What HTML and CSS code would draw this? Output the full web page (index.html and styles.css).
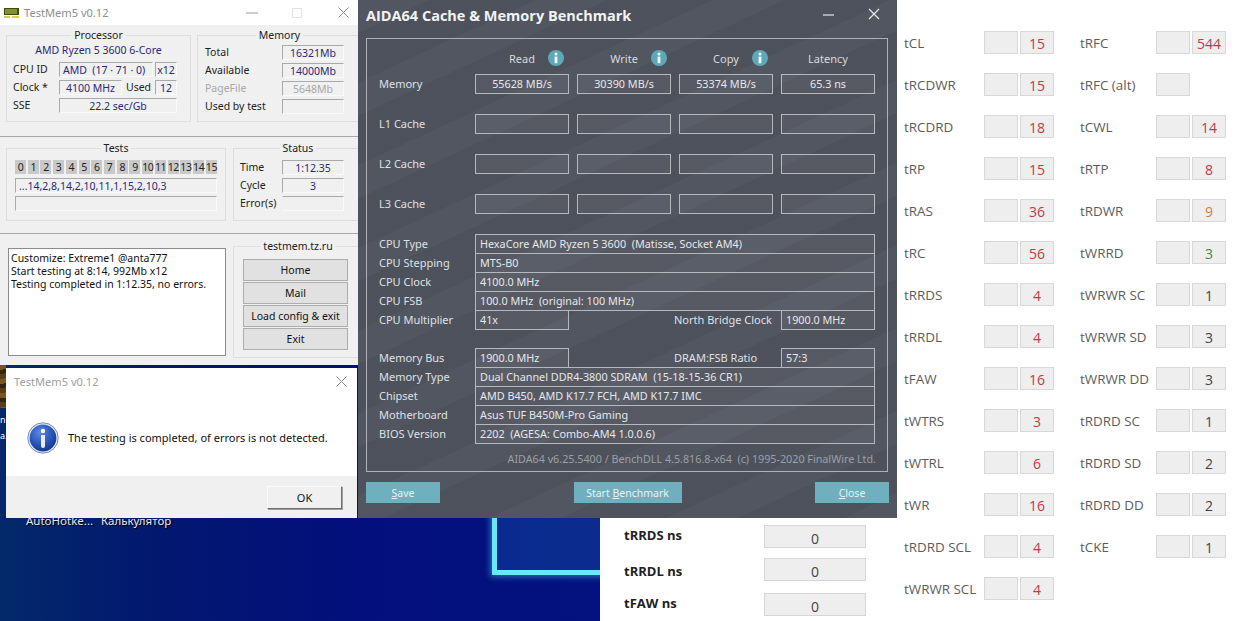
FILE: index.html
```html
<!DOCTYPE html>
<html lang="en">
<head>
<meta charset="utf-8">
<title>TestMem5 and AIDA64</title>
<link rel="stylesheet" href="styles.css">
</head>
<body>
<div class="desktop">
  <div class="wallpaper">
    <div class="neon"></div>
    <div class="tile"></div>
    <span class="edge-a">n</span>
    <span class="edge-b">a.</span>
    <span class="shortcut-a">AutoHotke...</span>
    <span class="shortcut-b">Калькулятор</span>
  </div>

  <section class="tm">
    <header class="tm-title">
      <svg class="tm-icon" width="15" height="12" viewBox="0 0 15 12"><rect x="0" y="1" width="15" height="7" fill="#3d4a12"/><path d="M2 2v5M4 2v5M6 2v5M8 2v5M10 2v5M12 2v5" stroke="#c4d94a" stroke-width="1"/><path d="M0 9h6v2H0zM8 9h7v2H8z" fill="#d8d23a"/></svg>
      <span class="tm-name">TestMem5 v0.12</span>
      <svg class="ctl-min" width="12" height="2" viewBox="0 0 12 2"><path d="M0 1h12" stroke="#9a9a9a"/></svg>
      <svg class="ctl-max" width="10" height="10" viewBox="0 0 10 10"><rect x=".5" y=".5" width="9" height="9" fill="none" stroke="#e2e2e2"/></svg>
      <svg class="ctl-x" width="11" height="11" viewBox="0 0 11 11"><path d="M.5.5l10 10M10.5.5l-10 10" stroke="#8a8a8a"/></svg>
    </header>
    <div class="tm-body">
      <div class="tm-row tm-row-a">
        <fieldset class="group">
          <legend>Processor</legend>
          <div class="cpu-name">AMD Ryzen 5 3600 6-Core</div>
          <div class="fields">
            <div class="f-row"><span class="f-label w46">CPU ID</span><span class="sunk w94 left">AMD&nbsp; (17 · 71 · 0)</span><span class="sunk w22 ml2">x12</span></div>
            <div class="f-row"><span class="f-label w46">Clock *</span><span class="sunk w63">4100 MHz</span><span class="f-label w33 mid">Used</span><span class="sunk w22">12</span></div>
            <div class="f-row"><span class="f-label w46">SSE</span><span class="sunk w118">22.2 sec/Gb</span></div>
          </div>
        </fieldset>
        <fieldset class="group group-mem">
          <legend>Memory</legend>
          <div class="fields">
            <div class="f-row"><span class="f-label w77">Total</span><span class="sunk w62">16321Mb</span></div>
            <div class="f-row"><span class="f-label w77">Available</span><span class="sunk w62">14000Mb</span></div>
            <div class="f-row off"><span class="f-label w77">PageFile</span><span class="sunk w62">5648Mb</span></div>
            <div class="f-row"><span class="f-label w77">Used by test</span><span class="sunk w62"></span></div>
          </div>
        </fieldset>
      </div>
      <div class="rule"></div>
      <div class="tm-row tm-row-b">
        <fieldset class="group group-tests">
          <legend>Tests</legend>
          <div class="cells">
            <span>0</span><span>1</span><span>2</span><span>3</span><span>4</span><span>5</span><span>6</span><span>7</span><span>8</span><span>9</span><span>10</span><span>11</span><span>12</span><span>13</span><span>14</span><span>15</span>
          </div>
          <div class="fields test-lines">
            <span class="sunk w202 left">...14,2,8,14,2,10,11,1,15,2,10,3</span>
            <span class="sunk w202"></span>
          </div>
        </fieldset>
        <fieldset class="group group-status">
          <legend>Status</legend>
          <div class="fields status-lines">
            <div class="f-row"><span class="f-label w42">Time</span><span class="sunk w62">1:12.35</span></div>
            <div class="f-row"><span class="f-label w42">Cycle</span><span class="sunk w62">3</span></div>
            <div class="f-row"><span class="f-label w42">Error(s)</span><span class="sunk w62 top-only"></span></div>
          </div>
        </fieldset>
      </div>
      <div class="rule"></div>
      <div class="tm-row tm-row-c">
        <div class="log">Customize: Extreme1 @anta777<br>Start testing at 8:14, 992Mb x12<br>Testing completed in 1:12.35, no errors.</div>
        <fieldset class="group group-links">
          <legend>testmem.tz.ru</legend>
          <div class="link-btns">
            <button type="button">Home</button>
            <button type="button">Mail</button>
            <button type="button">Load config &amp; exit</button>
            <button type="button">Exit</button>
          </div>
        </fieldset>
      </div>
    </div>
  </section>

  <section class="dialog">
    <header class="dlg-title">
      <span>TestMem5 v0.12</span>
      <svg width="11" height="11" viewBox="0 0 11 11"><path d="M.5.5l10 10M10.5.5l-10 10" stroke="#8a8a8a"/></svg>
    </header>
    <div class="dlg-msg">
      <svg width="32" height="32" viewBox="0 0 32 32">
        <defs>
          <radialGradient id="ig" cx=".4" cy=".3" r=".8"><stop offset="0" stop-color="#5d8be0"/><stop offset=".6" stop-color="#2450b4"/><stop offset="1" stop-color="#14307e"/></radialGradient>
        </defs>
        <circle cx="16" cy="16" r="15.2" fill="#e8eef8" stroke="#6f88c0" stroke-width="1"/>
        <circle cx="16" cy="16" r="13.4" fill="url(#ig)"/>
        <circle cx="16" cy="9" r="2.2" fill="#fff"/>
        <path d="M14 13h4v11a2 2 0 0 1-4 0z" fill="#e8edf6"/>
      </svg>
      <p>The testing is completed, of errors is not detected.</p>
    </div>
    <footer class="dlg-foot"><button type="button">OK</button></footer>
  </section>

  <section class="aida">
    <header class="aida-title">
      <h1>AIDA64 Cache &amp; Memory Benchmark</h1>
      <svg class="a-min" width="11" height="2" viewBox="0 0 11 2"><path d="M0 1h11" stroke="#e6e8ea" stroke-width="1.2"/></svg>
      <svg class="a-x" width="12" height="12" viewBox="0 0 12 12"><path d="M1 1l10 10M11 1L1 11" stroke="#e6e8ea" stroke-width="1.2"/></svg>
    </header>
    <div class="frame">
      <div class="bench">
        <span></span>
        <span class="col-h">Read<svg class="info" width="16" height="16" viewBox="0 0 16 16"><use href="#info-i"/></svg></span>
        <span class="col-h">Write<svg class="info" width="16" height="16" viewBox="0 0 16 16"><use href="#info-i"/></svg></span>
        <span class="col-h">Copy<svg class="info" width="16" height="16" viewBox="0 0 16 16"><use href="#info-i"/></svg></span>
        <span class="col-h">Latency</span>

        <span class="a-label">Memory</span><span class="a-box">55628 MB/s</span><span class="a-box">30390 MB/s</span><span class="a-box">53374 MB/s</span><span class="a-box">65.3 ns</span>
        <span class="a-label">L1 Cache</span><span class="a-box"></span><span class="a-box"></span><span class="a-box"></span><span class="a-box"></span>
        <span class="a-label">L2 Cache</span><span class="a-box"></span><span class="a-box"></span><span class="a-box"></span><span class="a-box"></span>
        <span class="a-label">L3 Cache</span><span class="a-box"></span><span class="a-box"></span><span class="a-box"></span><span class="a-box"></span>
      </div>

      <div class="info-block">
        <span class="a-label">CPU Type</span><span class="i-box wide">HexaCore AMD Ryzen 5 3600  (Matisse, Socket AM4)</span>
        <span class="a-label">CPU Stepping</span><span class="i-box wide">MTS-B0</span>
        <span class="a-label">CPU Clock</span><span class="i-box wide">4100.0 MHz</span>
        <span class="a-label">CPU FSB</span><span class="i-box wide">100.0 MHz  (original: 100 MHz)</span>
        <span class="a-label">CPU Multiplier</span><span class="i-box">41x</span><span class="a-label mid-label">North Bridge Clock</span><span class="i-box">1900.0 MHz</span>
      </div>

      <div class="info-block second">
        <span class="a-label">Memory Bus</span><span class="i-box">1900.0 MHz</span><span class="a-label mid-label">DRAM:FSB Ratio</span><span class="i-box">57:3</span>
        <span class="a-label">Memory Type</span><span class="i-box wide">Dual Channel DDR4-3800 SDRAM  (15-18-15-36 CR1)</span>
        <span class="a-label">Chipset</span><span class="i-box wide">AMD B450, AMD K17.7 FCH, AMD K17.7 IMC</span>
        <span class="a-label">Motherboard</span><span class="i-box wide">Asus TUF B450M-Pro Gaming</span>
        <span class="a-label">BIOS Version</span><span class="i-box wide">2202  (AGESA: Combo-AM4 1.0.0.6)</span>
      </div>

      <p class="copyright">AIDA64 v6.25.5400 / BenchDLL 4.5.816.8-x64  (c) 1995-2020 FinalWire Ltd.</p>
    </div>
    <div class="aida-btns">
      <button type="button" class="b-save"><u>S</u>ave</button>
      <button type="button" class="b-start">Start <u>B</u>enchmark</button>
      <button type="button" class="b-save"><u>C</u>lose</button>
    </div>
    <svg class="defs" width="0" height="0">
      <symbol id="info-i" viewBox="0 0 16 16">
        <circle cx="8" cy="8" r="8" fill="#5fa8b8"/>
        <circle cx="8" cy="4" r="1.5" fill="#f2f8fa"/>
        <path d="M6.6 6.6h2.8v6.6H6.6z" fill="#f2f8fa"/>
      </symbol>
    </svg>
  </section>

  <section class="ns-panel">
    <span class="ns-label">tRRDS ns</span><span class="ns-box">0</span>
    <span class="ns-label ns-mid">tRRDL ns</span><span class="ns-box">0</span>
    <span class="ns-label">tFAW ns</span><span class="ns-box">0</span>
  </section>

  <section class="timings">
    <span class="t-l">tCL</span><span class="t-b"></span><span class="t-b red">15</span>
    <span class="t-r">tRFC</span><span class="t-b"></span><span class="t-b red">544</span>
    <span class="t-l">tRCDWR</span><span class="t-b"></span><span class="t-b red">15</span>
    <span class="t-r">tRFC (alt)</span><span class="t-b"></span>
    <span class="t-l">tRCDRD</span><span class="t-b"></span><span class="t-b red">18</span>
    <span class="t-r">tCWL</span><span class="t-b"></span><span class="t-b red">14</span>
    <span class="t-l">tRP</span><span class="t-b"></span><span class="t-b red">15</span>
    <span class="t-r">tRTP</span><span class="t-b"></span><span class="t-b red">8</span>
    <span class="t-l">tRAS</span><span class="t-b"></span><span class="t-b red">36</span>
    <span class="t-r">tRDWR</span><span class="t-b"></span><span class="t-b orange">9</span>
    <span class="t-l">tRC</span><span class="t-b"></span><span class="t-b red">56</span>
    <span class="t-r">tWRRD</span><span class="t-b"></span><span class="t-b green">3</span>
    <span class="t-l">tRRDS</span><span class="t-b"></span><span class="t-b red">4</span>
    <span class="t-r">tWRWR SC</span><span class="t-b"></span><span class="t-b">1</span>
    <span class="t-l">tRRDL</span><span class="t-b"></span><span class="t-b red">4</span>
    <span class="t-r">tWRWR SD</span><span class="t-b"></span><span class="t-b">3</span>
    <span class="t-l">tFAW</span><span class="t-b"></span><span class="t-b red">16</span>
    <span class="t-r">tWRWR DD</span><span class="t-b"></span><span class="t-b">3</span>
    <span class="t-l">tWTRS</span><span class="t-b"></span><span class="t-b red">3</span>
    <span class="t-r">tRDRD SC</span><span class="t-b"></span><span class="t-b">1</span>
    <span class="t-l">tWTRL</span><span class="t-b"></span><span class="t-b red">6</span>
    <span class="t-r">tRDRD SD</span><span class="t-b"></span><span class="t-b">2</span>
    <span class="t-l">tWR</span><span class="t-b"></span><span class="t-b red">16</span>
    <span class="t-r">tRDRD DD</span><span class="t-b"></span><span class="t-b">2</span>
    <span class="t-l">tRDRD SCL</span><span class="t-b"></span><span class="t-b red">4</span>
    <span class="t-r">tCKE</span><span class="t-b"></span><span class="t-b">1</span>
    <span class="t-l">tWRWR SCL</span><span class="t-b"></span><span class="t-b red">4</span>
  </section>
</div>
</body>
</html>
```
FILE: styles.css
```css
* { box-sizing: border-box; }
html, body { margin: 0; padding: 0; }
body { font-family: "Noto Sans", "Open Sans", sans-serif; background: #fff; }

.desktop { position: relative; width: 1245px; height: 621px; overflow: hidden; background: #fff; }

/* wallpaper */
.wallpaper {
  position: absolute; left: 0; top: 360px; width: 600px; height: 261px; overflow: hidden;
  background: linear-gradient(90deg, #03296a 0, #02186f 25%, #020f7c 60%, #04127f 100%);
}
.neon {
  position: absolute; left: 492px; top: 120px; width: 130px; height: 95px;
  border-left: 5px solid #69e7fb; border-bottom: 5px solid #69e7fb;
  background: linear-gradient(90deg, #0a2a90, #0b2c8c);
  box-shadow: -2px 2px 6px rgba(90, 210, 250, .45);
}
.tile { position: absolute; left: 0; top: 5px; width: 6px; height: 43px; background: repeating-linear-gradient(170deg, #7a5620 0 5px, #33240f 5px 9px, #5a3d16 9px 14px); }
.edge-a, .edge-b { position: absolute; left: 0; color: #fff; font-size: 9px; line-height: 14px; }
.edge-a { top: 53px; }
.edge-b { top: 69px; }
.shortcut-a, .shortcut-b { position: absolute; top: 153px; color: #e8e8e8; font-size: 11.5px; line-height: 16px; text-shadow: 1px 1px 1px #000; }
.shortcut-a { left: 26px; }
.shortcut-b { left: 101px; }

/* TestMem5 */
.tm {
  position: absolute; left: 0; top: 0; width: 358px; height: 365px; overflow: hidden;
  background: #f0f0f0; font-size: 10.5px; color: #222; display: flex; flex-direction: column;
}
.tm-title { flex: none; height: 25px; background: #fff; display: flex; align-items: center; padding-left: 4px; position: relative; }
.tm-icon { flex: none; }
.tm-name { margin-left: 5px; font-size: 11.1px; color: #8e8e8e; }
.ctl-min { position: absolute; left: 246px; top: 12px; }
.ctl-max { position: absolute; left: 292px; top: 8px; }
.ctl-x { position: absolute; left: 338px; top: 7px; }
.tm-body { flex: 1; padding: 3px 0 0 6px; }
.tm-row { display: grid; }
.tm-row-a { grid-template-columns: 185px 165px; column-gap: 6px; height: 94px; }
.tm-row-b { grid-template-columns: 220px 130px; column-gap: 7px; height: 80px; }
.tm-row-c { grid-template-columns: 220px 130px; column-gap: 7px; height: 119px; }
.rule { height: 1px; background: #a8a8a8; margin: 14px 0 4px -6px; width: 358px; }
.tm-row-b + .rule { margin: 12px 0 5px -6px; }
.group { margin: 0; padding: 0; min-width: 0; border: 1px solid #dedede; height: 100%; }
.group legend { margin: 0 auto; padding: 0 3px; line-height: 14px; height: 14px; font-size: 10.5px; color: #222; }
.cpu-name { text-align: center; color: #2a2a7c; line-height: 15px; height: 20px; padding-top: 1px; }
.fields { display: flex; flex-direction: column; gap: 3px; padding-left: 6px; }
.group-mem .fields { padding: 3px 0 0 7px; }
.f-row { display: flex; align-items: center; height: 15px; }
.f-label { flex: none; white-space: nowrap; line-height: 15px; }
.mid { text-align: center; }
.off { color: #a8a8a8; }
.off .sunk { color: #a8a8a8; }
.sunk {
  flex: none; display: block; height: 15px; line-height: 14px; text-align: center; color: #2a2a7c;
  border: 1px solid; border-color: #a9a9a9 #fafafa #fafafa #a9a9a9; white-space: nowrap; overflow: hidden;
}
.left { text-align: left; padding-left: 3px; }
.top-only { border-left-color: transparent; }
.w22 { width: 22px; } .w33 { width: 33px; } .w42 { width: 42px; } .w46 { width: 46px; }
.w62 { width: 62px; } .w63 { width: 63px; } .w77 { width: 77px; } .w94 { width: 94px; }
.w118 { width: 118px; } .w202 { width: 202px; }
.ml2 { margin-left: 2px; }
.group-tests { padding: 0; }
.cells { display: grid; grid-template-columns: repeat(16, 11px); column-gap: 1.73px; margin: 5px 0 0 8px; height: 14px; }
.cells span { background: #c9c9c9; color: #222; text-align: center; font-size: 10.5px; line-height: 14px; letter-spacing: -.4px; }
.test-lines { padding: 4px 0 0 8px; }
.status-lines { padding: 5px 0 0 6px; }
.log {
  margin: 9px 0 2px 2px; padding: 3px 2px; background: #fff; border: 1px solid #8c8c8c;
  font-size: 10.5px; line-height: 13px; color: #111; height: 108px; white-space: nowrap;
}
.link-btns { display: flex; flex-direction: column; gap: 1px; padding: 6px 0 0 9px; }
.link-btns button {
  width: 105px; height: 22px; padding: 0; background: #e1e1e1; border: 1px solid #adadad;
  font: 10.5px "Noto Sans", sans-serif; color: #111;
}

/* dialog */
.dialog {
  position: absolute; left: 6px; top: 368px; width: 351px; height: 150px; background: #fff;
  display: flex; flex-direction: column; font-size: 11px;
}
.dlg-title { height: 27px; flex: none; display: flex; align-items: center; justify-content: space-between; padding: 0 10px 0 8px; font-size: 11.1px; color: #a0a0a0; }
.dlg-msg { height: 81px; flex: none; display: flex; align-items: center; gap: 9px; padding: 4px 0 0 21px; }
.dlg-msg p { margin: 0; color: #111; white-space: nowrap; font-size: 11px; }
.dlg-foot { flex: 1; background: #f0f0f0; display: flex; justify-content: flex-end; align-items: flex-start; padding: 10px 15px 0 0; }
.dlg-foot button {
  width: 75px; height: 23px; padding: 0; background: #f0f0f0; font: 11px "Noto Sans", sans-serif; color: #111;
  border: 1px solid; border-color: #fafafa #6e6e6e #6e6e6e #fafafa; box-shadow: 1px 1px 0 #a0a0a0;
}

/* AIDA64 */
.aida {
  position: absolute; left: 358px; top: 0; width: 539px; height: 518px; color: #e4e6e8; font-size: 11px;
  background:
    repeating-linear-gradient(155deg, rgba(255,255,255,.02) 0 30px, rgba(0,0,0,.02) 30px 75px),
    #4f535d;
}
.aida-title { height: 38px; position: relative; padding: 6px 0 0 8px; }
.aida-title h1 { margin: 0; font: 700 14.5px/20px "Open Sans", sans-serif; color: #f2f3f4; }
.a-min { position: absolute; left: 465px; top: 14px; }
.a-x { position: absolute; left: 510px; top: 8px; }
.frame { margin-left: 8px; width: 522px; height: 434px; border: 1px solid #aeb2b8; padding: 9px 0 0 12px; }
.bench { display: grid; grid-template-columns: 88px repeat(4, 94px); column-gap: 8px; grid-auto-rows: 20px; row-gap: 20px; }
.bench > :nth-child(-n+5) { margin-bottom: -14px; }
.bench > :nth-child(n+6) { transform: translateY(-14px); }
.col-h { position: relative; text-align: center; line-height: 22px; color: #d8dadd; }
.info { position: absolute; left: 73px; top: 2px; }
.col-h:nth-child(3) .info { left: 74px; }
.defs { position: absolute; }
.a-label { line-height: 20px; white-space: nowrap; color: #dfe1e4; }
.a-box { height: 20px; line-height: 18px; text-align: center; font-size: 10.8px; background: rgba(255,255,255,.05); border: 1px solid #b5b8bc; color: #e6e8ea; }
.info-block { display: grid; grid-template-columns: 88px repeat(4, 94px); column-gap: 8px; grid-auto-rows: 19px; margin-top: 6px; }
.info-block.second { margin-top: 19px; }
.i-box {
  height: 20px; line-height: 18px; padding-left: 4px; white-space: pre; font-size: 10.8px; background: rgba(255,255,255,.05);
  border: 1px solid #b5b8bc; color: #e6e8ea;
}
.wide { grid-column: 2 / -1; }
.mid-label { grid-column: 3 / 5; padding-left: 97px; }
.copyright { margin: 7px 0 0; width: 497px; text-align: right; white-space: pre; color: #9ba0a6; font-size: 10.75px; line-height: 18px; }
.aida-btns { display: flex; justify-content: space-between; width: 523px; margin: 10px 0 0 8px; }
.aida-btns button {
  height: 21px; padding: 0; border: 0; background: #6fb0bf; color: #e9f2f4; font: 10.5px "Noto Sans", sans-serif;
}
.b-save { width: 74px; }
.b-start { width: 108px; }

/* bottom panel */
.ns-panel {
  position: absolute; left: 600px; top: 518px; width: 297px; height: 103px; background: #fff;
  display: grid; grid-template-columns: 140px 102px; grid-template-rows: 33px 35px 33px; padding: 7px 0 0 24px; align-items: start;
}
.ns-label { font: 700 13px/20px "Open Sans", sans-serif; color: #222; }
.ns-mid { margin-top: 3px; }
.ns-box { height: 23px; text-align: center; background: #eee; border: 1px solid #d6d6d6; color: #444; font: 14px/25px "Open Sans", sans-serif; }

/* timings */
.timings {
  position: absolute; left: 897px; top: 0; width: 348px; height: 621px; background: #fff; padding: 31px 0 0 7px;
  display: grid; grid-template-columns: 78px 34px 34px 22px 74px 34px 34px; column-gap: 2px;
  grid-auto-rows: 22px; row-gap: 20px; align-content: start; font: 14px "Open Sans", sans-serif;
}
.t-l, .t-r { line-height: 24px; color: #5c5c5c; white-space: nowrap; font-size: 13.4px; }
.t-l { grid-column: 1; }
.t-r { grid-column: 5; }
.t-b { height: 23px; background: #eee; border: 1px solid #d8d8d8; text-align: center; line-height: 24px; color: #444; font-size: 14px; }
.red { color: #c23a46; }
.orange { color: #d87a3a; }
.green { color: #3e8a46; }
```
